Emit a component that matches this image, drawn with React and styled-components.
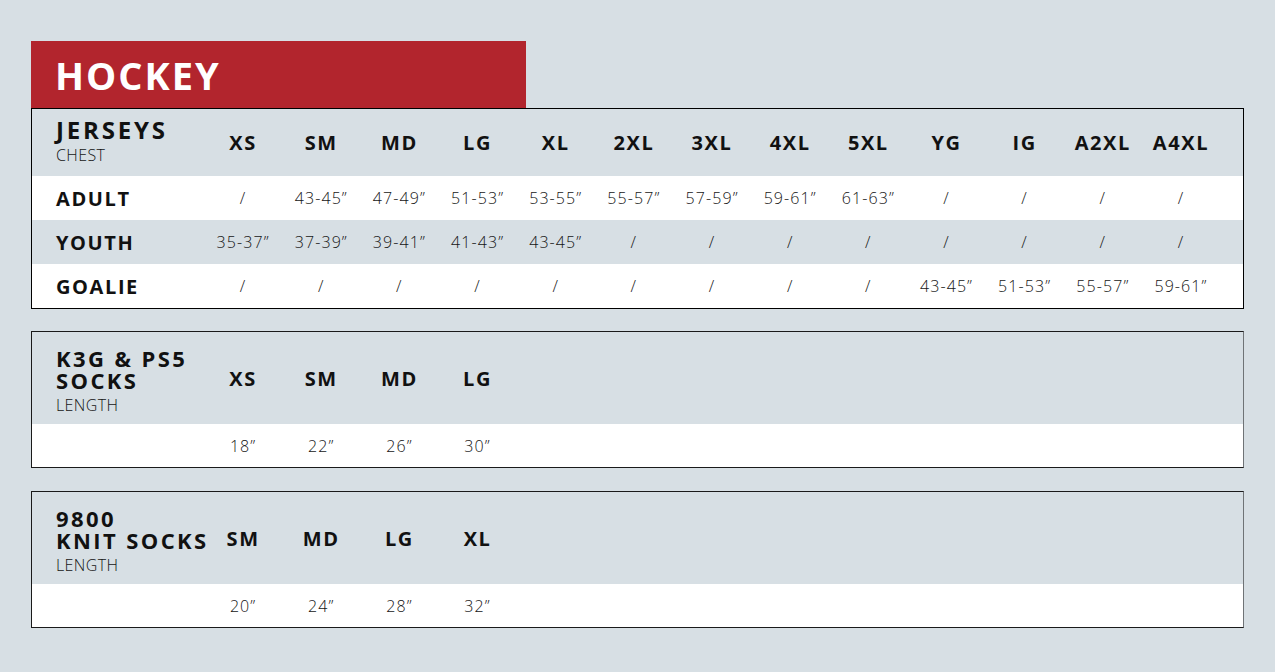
import React from "react";
import styled, { createGlobalStyle } from "styled-components";

const Global = createGlobalStyle`
  html, body { margin: 0; padding: 0; background: #d7dfe4; }
  body { font-family: "Open Sans", "Liberation Sans", sans-serif; color: #111; }
  * { box-sizing: border-box; }
`;

const Page = styled.div`
  width: 1275px;
  height: 672px;
  padding: 41px 0 0 31px;
  background: #d7dfe4;
`;

const Sheet = styled.div`
  width: 1213px;
  display: flex;
  flex-direction: column;
`;

const Tab = styled.div`
  width: 495px;
  height: 67px;
  background: #b2252d;
  display: flex;
  align-items: center;
  padding-left: 24px;
`;

const TabTitle = styled.h1`
  margin: 0;
  color: #fff;
  font-size: 38px;
  font-weight: 700;
  letter-spacing: 2px;
  line-height: 1;
`;

const Table = styled.div`
  border: 1px solid ${(p) => p.$border};
  border-right-color: ${(p) => p.$right || p.$border};
  margin-top: ${(p) => p.$mt || 0}px;
  display: flex;
  flex-direction: column;
`;

const Row = styled.div`
  display: grid;
  grid-template-columns: 172px repeat(${(p) => p.$cols}, 78.17px) 1fr;
  height: ${(p) => p.$h}px;
  align-items: center;
  background: ${(p) => (p.$white ? "#ffffff" : "#d7dfe4")};
`;

const LabelBlock = styled.div`
  padding-left: 24px;
  display: flex;
  flex-direction: column;
  margin-top: ${(p) => p.$mt || 0}px;
`;

const Title = styled.div`
  font-size: ${(p) => p.$size}px;
  font-weight: 700;
  line-height: ${(p) => p.$lh}px;
  letter-spacing: ${(p) => p.$ls}px;
  color: #111;
  white-space: nowrap;
`;

const Sub = styled.div`
  font-size: 16px;
  font-weight: 300;
  line-height: 18px;
  margin-top: ${(p) => p.$gap || 0}px;
  color: #151515;
  letter-spacing: 0.4px;
`;

const SizeHead = styled.div`
  text-align: center;
  font-size: 20px;
  font-weight: 700;
  letter-spacing: 1.6px;
  color: #111;
  white-space: nowrap;
`;

const RowLabel = styled.div`
  padding-left: 24px;
  font-size: 20px;
  font-weight: 700;
  letter-spacing: 1.6px;
  color: #111;
`;

const Val = styled.div`
  text-align: center;
  font-size: 16px;
  font-weight: 300;
  letter-spacing: 1.1px;
  color: #151515;
  white-space: nowrap;
`;

const Q = "\u201D";

const jerseySizes = ["XS", "SM", "MD", "LG", "XL", "2XL", "3XL", "4XL", "5XL", "YG", "IG", "A2XL", "A4XL"];
const jerseyRows = [
  { label: "ADULT", white: true, vals: ["/", "43-45", "47-49", "51-53", "53-55", "55-57", "57-59", "59-61", "61-63", "/", "/", "/", "/"] },
  { label: "YOUTH", white: false, vals: ["35-37", "37-39", "39-41", "41-43", "43-45", "/", "/", "/", "/", "/", "/", "/", "/"] },
  { label: "GOALIE", white: true, vals: ["/", "/", "/", "/", "/", "/", "/", "/", "/", "43-45", "51-53", "55-57", "59-61"] },
];

const fmt = (v) => (v === "/" ? "/" : v + Q);

const sockTables = [
  { title: ["K3G & PS5", "SOCKS"], sizes: ["XS", "SM", "MD", "LG"], vals: ["18", "22", "26", "30"], mt: 22 },
  { title: ["9800", "KNIT SOCKS"], sizes: ["SM", "MD", "LG", "XL"], vals: ["20", "24", "28", "32"], mt: 23 },
];

export default function App() {
  return (
    <Page>
      <Global />
      <Sheet>
        <Tab>
          <TabTitle>HOCKEY</TabTitle>
        </Tab>
        <Table $border="#000">
          <Row $cols={13} $h={67}>
            <LabelBlock $mt={-5}>
              <Title $size={24} $lh={25} $ls={2.8}>JERSEYS</Title>
              <Sub $gap={4}>CHEST</Sub>
            </LabelBlock>
            {jerseySizes.map((s) => (
              <SizeHead key={s}>{s}</SizeHead>
            ))}
          </Row>
          {jerseyRows.map((r) => (
            <Row key={r.label} $cols={13} $h={44} $white={r.white}>
              <RowLabel>{r.label}</RowLabel>
              {r.vals.map((v, i) => (
                <Val key={i}>{fmt(v)}</Val>
              ))}
            </Row>
          ))}
        </Table>
        {sockTables.map((t) => (
          <Table key={t.title[0]} $border="#1a1a1a" $right="#6f7376" $mt={t.mt}>
            <Row $cols={4} $h={92}>
              <LabelBlock $mt={5}>
                <Title $size={22} $lh={22} $ls={2.4}>
                  {t.title[0]}
                  <br />
                  {t.title[1]}
                </Title>
                <Sub $gap={5}>LENGTH</Sub>
              </LabelBlock>
              {t.sizes.map((s) => (
                <SizeHead key={s}>{s}</SizeHead>
              ))}
            </Row>
            <Row $cols={4} $h={43} $white>
              <div />
              {t.vals.map((v) => (
                <Val key={v}>{fmt(v)}</Val>
              ))}
            </Row>
          </Table>
        ))}
      </Sheet>
    </Page>
  );
}
